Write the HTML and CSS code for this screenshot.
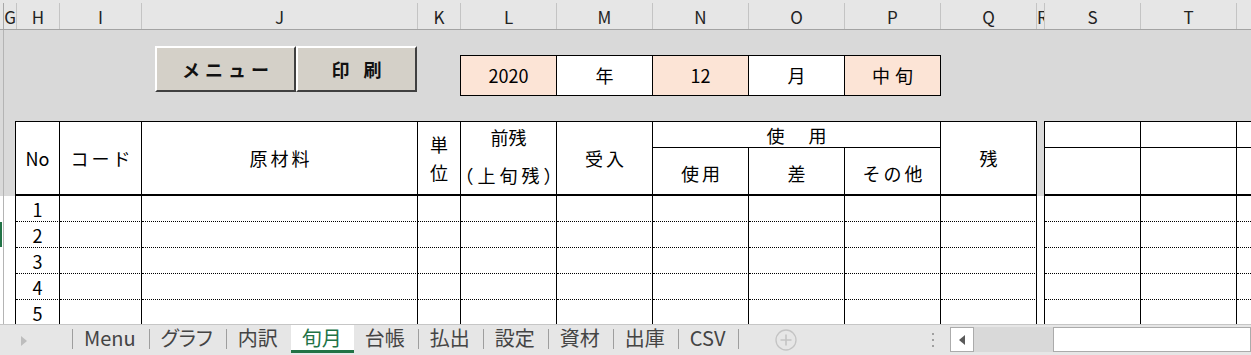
FILE: index.html
```html
<!DOCTYPE html>
<html lang="ja">
<head>
  <meta charset="UTF-8" />
  <meta name="viewport" content="width=device-width, initial-scale=1.0"/>
  <title>旬月</title>
  <link rel="stylesheet" href="styles.css">
</head>
<body>

  <!-- column letters -->
  <div class="colhead">
    <div class="ch c-rh"></div>
    <div class="ch c-g">G</div>
    <div class="ch c-h">H</div>
    <div class="ch c-i">I</div>
    <div class="ch c-j">J</div>
    <div class="ch c-k">K</div>
    <div class="ch c-std">L</div>
    <div class="ch c-std">M</div>
    <div class="ch c-std">N</div>
    <div class="ch c-std">O</div>
    <div class="ch c-std">P</div>
    <div class="ch c-std">Q</div>
    <div class="ch c-r">R</div>
    <div class="ch c-std">S</div>
    <div class="ch c-std">T</div>
    <div class="ch c-u"></div>
  </div>

  <div class="sheet">
    <div class="rh"><div class="rh-sel"></div></div>

    <div class="cells">
      <div class="band">
        <div class="btns">
          <button class="btn btn-menu">メニュー</button>
          <button class="btn btn-print">印 刷</button>
        </div>
        <div class="period">
          <div class="pc fill">2020</div>
          <div class="pc">年</div>
          <div class="pc fill">12</div>
          <div class="pc">月</div>
          <div class="pc fill wide">中旬</div>
        </div>
      </div>

      <div class="tables">
        <div class="grid main">
          <div class="hd r2">No</div>
          <div class="hd r2 sp">コード</div>
          <div class="hd r2 sp">原材料</div>
          <div class="hd r2 unit">単<br>位</div>
          <div class="hd r2 prev"><span>前残</span><span class="paren">（上旬残）</span></div>
          <div class="hd r2 sp">受入</div>
          <div class="hd c3 sp">使　用</div>
          <div class="hd r2 sp">残</div>
          <div class="hd sub sp">使用</div>
          <div class="hd sub sp">差</div>
          <div class="hd sub sp">その他</div>

          <div class="td">1</div><div class="td"></div><div class="td"></div><div class="td"></div><div class="td"></div><div class="td"></div><div class="td"></div><div class="td"></div><div class="td"></div><div class="td"></div>
          <div class="td">2</div><div class="td"></div><div class="td"></div><div class="td"></div><div class="td"></div><div class="td"></div><div class="td"></div><div class="td"></div><div class="td"></div><div class="td"></div>
          <div class="td">3</div><div class="td"></div><div class="td"></div><div class="td"></div><div class="td"></div><div class="td"></div><div class="td"></div><div class="td"></div><div class="td"></div><div class="td"></div>
          <div class="td">4</div><div class="td"></div><div class="td"></div><div class="td"></div><div class="td"></div><div class="td"></div><div class="td"></div><div class="td"></div><div class="td"></div><div class="td"></div>
          <div class="td">5</div><div class="td"></div><div class="td"></div><div class="td"></div><div class="td"></div><div class="td"></div><div class="td"></div><div class="td"></div><div class="td"></div><div class="td"></div>
        </div>

        <div class="grid side">
          <div class="hd"></div><div class="hd"></div><div class="hd"></div>
          <div class="hd sub"></div><div class="hd sub"></div><div class="hd sub"></div>
          <div class="td"></div><div class="td"></div><div class="td"></div>
          <div class="td"></div><div class="td"></div><div class="td"></div>
          <div class="td"></div><div class="td"></div><div class="td"></div>
          <div class="td"></div><div class="td"></div><div class="td"></div>
          <div class="td"></div><div class="td"></div><div class="td"></div>
        </div>
      </div>
    </div>
  </div>

  <!-- sheet tabs -->
  <div class="tabbar">
    <div class="nav">
      <svg width="6" height="10" viewBox="0 0 6 10"><path d="M0 0 L6 5 L0 10 Z" fill="#bdbdbd"/></svg>
    </div>
    <i class="sep"></i><div class="tab">Menu</div>
    <i class="sep"></i><div class="tab">グラフ</div>
    <i class="sep"></i><div class="tab">内訳</div>
    <div class="tab active">旬月</div>
    <div class="tab">台帳</div>
    <i class="sep"></i><div class="tab">払出</div>
    <i class="sep"></i><div class="tab">設定</div>
    <i class="sep"></i><div class="tab">資材</div>
    <i class="sep"></i><div class="tab">出庫</div>
    <i class="sep"></i><div class="tab">CSV</div>
    <i class="sep"></i>

    <div class="add">
      <svg width="22" height="22" viewBox="0 0 22 22">
        <circle cx="11" cy="11" r="10" fill="none" stroke="#c4c4c4" stroke-width="1.3"/>
        <path d="M11 5.5 V16.5 M5.5 11 H16.5" stroke="#c4c4c4" stroke-width="1.6"/>
      </svg>
    </div>
    <div class="dots"><b></b><b></b><b></b></div>

    <div class="hscroll">
      <div class="sb-arrow">
        <svg width="6" height="10" viewBox="0 0 6 10"><path d="M6 0 L0 5 L6 10 Z" fill="#5a5a5a"/></svg>
      </div>
      <div class="sb-thumb"></div>
      <div class="sb-track"></div>
    </div>
  </div>

</body>
</html>
```

FILE: styles.css
```css
* { box-sizing: border-box; }
body { margin: 0; width: 1251px; height: 355px; overflow: hidden; background: #fff; color: #000; font-family: "Noto Sans CJK JP", "Noto Sans", sans-serif; }

/* column letters */
.colhead { display: flex; height: 30px; padding-top: 3px; background: #e6e6e6; border-bottom: 1px solid #a3a3a3; overflow: hidden; }
.ch { flex: none; height: 26px; border-right: 1px solid #c4c4c4; overflow: hidden; text-align: center; font-size: 17px; line-height: 28px; color: #222; }
.c-rh { width: 4px; border-right-color: #a8a8a8; }
.c-g { width: 13px; }
.c-h { width: 43px; }
.c-i { width: 82px; }
.c-j { width: 276px; }
.c-k { width: 43px; }
.c-std { width: 96px; }
.c-r { width: 8px; }
.c-u { flex: 1; border-right: 0; }

/* sheet body */
.sheet { display: flex; height: 294px; overflow: hidden; }
.rh { flex: none; width: 4px; padding-top: 192px; border-right: 1px solid #b4b4b4; background: linear-gradient(#d9d9d9 166px, #fff 166px); }
.rh-sel { width: 2px; height: 25px; background: #217346; }
.cells { flex: 1; overflow: hidden; background: linear-gradient(#d9d9d9 166px, #fff 166px); }

.band { display: flex; align-items: flex-start; height: 91px; padding: 16px 0 0 151px; }
.btns { display: flex; }
.btn { height: 46px; padding: 0 0 0 5px; background: #d4d0c8; border: 2px solid; border-color: #fff #404040 #404040 #fff; font-family: "Noto Sans CJK JP", sans-serif; font-size: 18px; font-weight: bold; letter-spacing: 5px; color: #111; }
.btn-menu { width: 141px; }
.btn-print { width: 121px; }

.period { display: flex; margin: 9px 0 0 43px; border: 1px solid #000; border-right: 0; }
.pc { width: 96px; height: 39px; border-right: 1px solid #000; background: #fff; text-align: center; font-size: 18px; line-height: 39px; }
.pc.fill { background: #fce4d6; }
.pc.wide { letter-spacing: 5px; padding-left: 5px; }

/* tables */
.tables { display: flex; align-items: flex-start; padding-left: 11px; }
.grid { display: grid; grid-template-rows: 26px 48px repeat(5, 26px); border-left: 1px solid #000; border-top: 1px solid #000; background: #fff; }
.main { grid-template-columns: 44px 82px 276px 43px repeat(6, 96px); }
.side { flex: none; margin-left: 7px; grid-template-columns: 96px 96px 96px; }

.hd, .td { display: flex; align-items: center; justify-content: center; border-right: 1px solid #000; border-bottom: 1px solid #000; font-size: 18px; white-space: nowrap; }
.td { border-bottom-style: dotted; }
.r2 { grid-row: span 2; border-bottom-width: 2px; }
.c3 { grid-column: span 3; }
.sub { border-bottom-width: 2px; padding-top: 4px; }
.sp { letter-spacing: 3px; padding-left: 3px; }
.unit { line-height: 28px; text-align: center; }
.prev { flex-direction: column; line-height: 38px; padding-bottom: 5px; }
.paren { letter-spacing: 4px; padding-left: 4px; }

/* sheet tabs */
.tabbar { display: flex; align-items: flex-start; height: 31px; background: #e6e6e6; border-top: 1px solid #c6c6c6; }
.nav { flex: none; width: 72px; height: 28px; display: flex; align-items: center; padding: 4px 0 0 21px; }
.sep { flex: none; width: 1px; height: 20px; margin-top: 4px; background: #9e9e9e; }
.tab { flex: none; height: 28px; padding: 0 13px 0 11px; border-bottom: 3px solid transparent; font-size: 20px; line-height: 25px; color: #444; font-feature-settings: "palt"; }
.tab.active { background: #fff; color: #217346; border-bottom-color: #217346; padding-right: 12px; }

.add { flex: none; margin: 4px 0 0 36px; height: 22px; }
.dots { flex: none; display: flex; flex-direction: column; gap: 4px; margin: 8px 16px 0 auto; }
.dots b { width: 2px; height: 2px; background: #a0a0a0; }

.hscroll { flex: none; width: 301px; display: flex; height: 25px; margin-top: 2px; }
.sb-arrow { flex: none; width: 24px; display: flex; align-items: center; justify-content: center; background: #fff; border: 1px solid #ababab; }
.sb-thumb { flex: none; width: 79px; background: #d9d9d9; }
.sb-track { flex: 1; background: #fff; border: 1px solid #ababab; }
```
